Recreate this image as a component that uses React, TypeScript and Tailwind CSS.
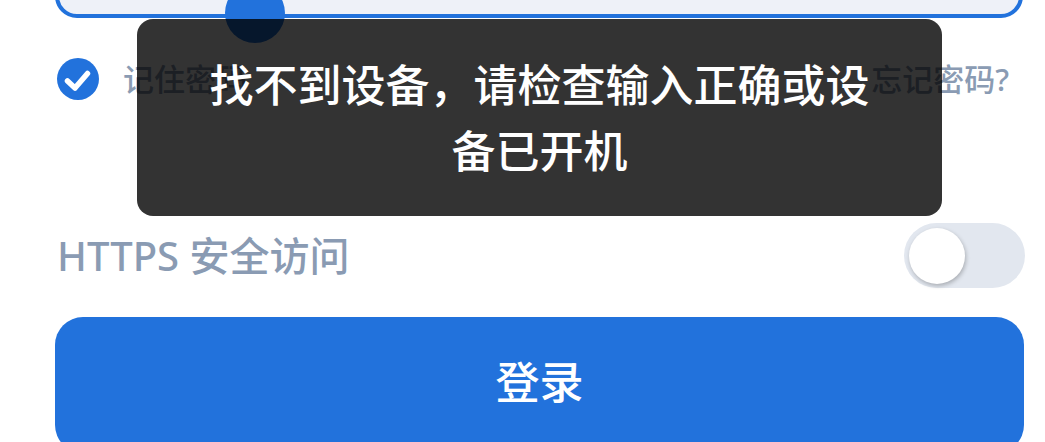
import React from "react";

export default function App() {
  return (
    <div
      className="relative w-[1045px] h-[442px] overflow-hidden bg-white pl-[55px] pr-[22px]"
      style={{ fontFamily: '"Noto Sans", "Noto Sans CJK SC", sans-serif' }}
    >
      {/* input */}
      <div className="h-[100px] mt-[-82px] border-4 border-[#2272dc] rounded-[22px] bg-[#eef1f8]" />

      {/* remember row */}
      <div className="mt-[37px] h-[48px] flex items-center justify-between pr-[14px]">
        <div className="flex items-center">
          <div className="ml-[2px] w-[42px] h-[42px] rounded-full bg-[#2272dc] flex items-center justify-center">
            <svg width="42" height="42" viewBox="0 0 42 42" fill="none">
              <path d="M10.5 23 L18 30 L30.5 15.5" stroke="white" strokeWidth="5.5" strokeLinecap="round" strokeLinejoin="round" />
            </svg>
          </div>
          <span className="ml-[24px] text-[31px] leading-none font-medium text-[#8a9bb3]">记住密码</span>
        </div>
        <span className="text-[31px] leading-none font-medium text-[#8a9bb3]">忘记密码?</span>
      </div>

      {/* https row */}
      <div className="mt-[120px] h-[65px] flex items-center justify-between">
        <span className="ml-[2px] text-[40px] leading-none font-medium text-[#8a9bb3]">HTTPS 安全访问</span>
        <div className="relative w-[121px] h-[65px] rounded-full bg-[#e2e7ef] mr-[-2px]">
          <div className="absolute left-[5px] top-[5px] w-[56px] h-[56px] rounded-full bg-white shadow-[1px_2px_4px_rgba(0,0,0,0.25)]" />
        </div>
      </div>

      {/* login button */}
      <div className="mt-[29px] h-[136px] mr-[-1px] rounded-[28px] bg-[#2272dc] flex items-center justify-center pb-[6px]">
        <span className="text-[44px] leading-none font-medium text-white">登录</span>
      </div>

      {/* cursor handle */}
      <div className="absolute left-[225px] top-[-17px] w-[60px] h-[60px] rounded-full bg-[#2272dc]" />

      {/* toast */}
      <div className="absolute left-[137px] top-[19px] w-[805px] h-[197px] rounded-[16px] bg-black/80 px-[64px] flex items-center justify-center">
        <p className="text-center text-[44px] leading-[66px] font-medium text-white">
          找不到设备，请检查输入正确或设备已开机
        </p>
      </div>
    </div>
  );
}
